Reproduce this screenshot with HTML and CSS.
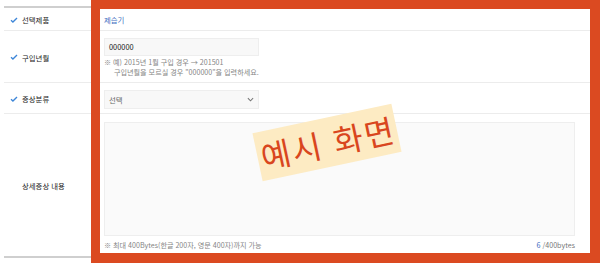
FILE: index.html
```html
<!DOCTYPE html>
<html lang="ko">
<head>
    <meta charset="UTF-8">
    <title>예시 화면</title>
    <link rel="stylesheet" href="styles.css">
</head>
<body>
<div class="form">
    <div class="row row-1">
        <div class="label"><svg class="chk" viewBox="0 0 10 8"><path d="M1 4.2 3.6 6.6 9 1.2"/></svg>선택제품</div>
        <div class="value"><span class="product">제습기</span></div>
    </div>
    <div class="row row-2">
        <div class="label"><svg class="chk" viewBox="0 0 10 8"><path d="M1 4.2 3.6 6.6 9 1.2"/></svg>구입년월</div>
        <div class="value">
            <div class="input">000000</div>
            <p class="hint">※ 예) 2015년 1월 구입 경우 → 201501</p>
            <p class="hint indent">구입년월을 모르실 경우 "000000"을 입력하세요.</p>
        </div>
    </div>
    <div class="row row-3">
        <div class="label"><svg class="chk" viewBox="0 0 10 8"><path d="M1 4.2 3.6 6.6 9 1.2"/></svg>증상분류</div>
        <div class="value">
            <div class="input select">
                <span>선택</span>
                <svg class="arrow" viewBox="0 0 8 5"><path d="M1 1 4 4 7 1"/></svg>
            </div>
        </div>
    </div>
    <div class="row row-4">
        <div class="label">상세증상 내용</div>
        <div class="value">
            <div class="textarea"></div>
            <div class="count-line">
                <span class="hint">※ 최대 400Bytes(한글 200자, 영문 400자)까지 가능</span>
                <span class="count"><em>6</em> /400bytes</span>
            </div>
        </div>
    </div>
</div>

<!-- 캡처 위에 덧그린 표시 -->
<div class="frame"></div>
<div class="stamp">예시 화면</div>
</body>
</html>
```

FILE: styles.css
```css
*{
    box-sizing: border-box;
}
body{
    margin: 0;
    width: 600px;
    height: 271px;
    overflow: hidden;
    background: #fff;
    font-family: "Noto Sans CJK KR", "Noto Sans", sans-serif;
    color: #333;
}
.form{
    margin: 6px 0 0 4px;
    width: 586px;
    border-top: 2px solid #cfcfcf;
    border-bottom: 2px solid #cfcfcf;
}
.row{
    display: flex;
    border-bottom: 1px solid #ececec;
}
.row-4{
    border-bottom: none;
}
.row-1{ height: 23px; }
.row-2{ height: 52px; }
.row-3{ height: 31px; }
.row-4{ height: 142px; }
.label{
    width: 96px;
    display: flex;
    align-items: center;
    padding: 1px 0 0 18px;
    font-size: 7.4px;
    color: #222;
    position: relative;
}
.chk{
    position: absolute;
    left: 6px;
    width: 8px;
    height: 6px;
    fill: none;
    stroke: #3d86d8;
    stroke-width: 1.8;
}
.value{
    flex: 1;
    padding: 0 15px 0 4px;
}
.row-1 .value{
    display: flex;
    align-items: center;
}
.product{
    font-size: 7.4px;
    color: #3f6fc2;
}
.input{
    width: 155px;
    height: 18px;
    margin-top: 7px;
    background: #f8f8f8;
    border: 1px solid #eeeeee;
    font-size: 7.4px;
    color: #222;
    line-height: 16px;
    padding-left: 4px;
}
.select{
    height: 19px;
    line-height: 17px;
    display: flex;
    justify-content: space-between;
    align-items: center;
    padding-right: 4px;
    color: #666;
}
.arrow{
    width: 7px;
    height: 5px;
    fill: none;
    stroke: #777;
    stroke-width: 1.2;
}
.hint{
    margin: 0;
    font-size: 7.1px;
    line-height: 10px;
    color: #858585;
}
.row-2 .hint:first-of-type{
    margin-top: 1px;
}
.indent{
    padding-left: 10px;
}
.textarea{
    margin-top: 8px;
    height: 114px;
    background: #fafafa;
    border: 1px solid #eeeeee;
}
.count-line{
    display: flex;
    justify-content: space-between;
    margin-top: 4px;
    line-height: 10px;
}
.count{
    font-size: 7.1px;
    color: #777;
}
.count em{
    font-style: normal;
    color: #3f6fc2;
}
.frame{
    position: absolute;
    left: 91px;
    top: 0;
    width: 509px;
    height: 263px;
    border-style: solid;
    border-color: #db4a21;
    border-width: 9px 10px 10px 9px;
}
.stamp{
    position: absolute;
    left: 256px;
    top: 118px;
    width: 142px;
    height: 49px;
    transform: rotate(-12deg);
    background: #fdebc3;
    color: #d9461e;
    font-size: 32px;
    line-height: 49px;
    text-align: center;
    letter-spacing: 2px;
    text-indent: 2px;
}
```
